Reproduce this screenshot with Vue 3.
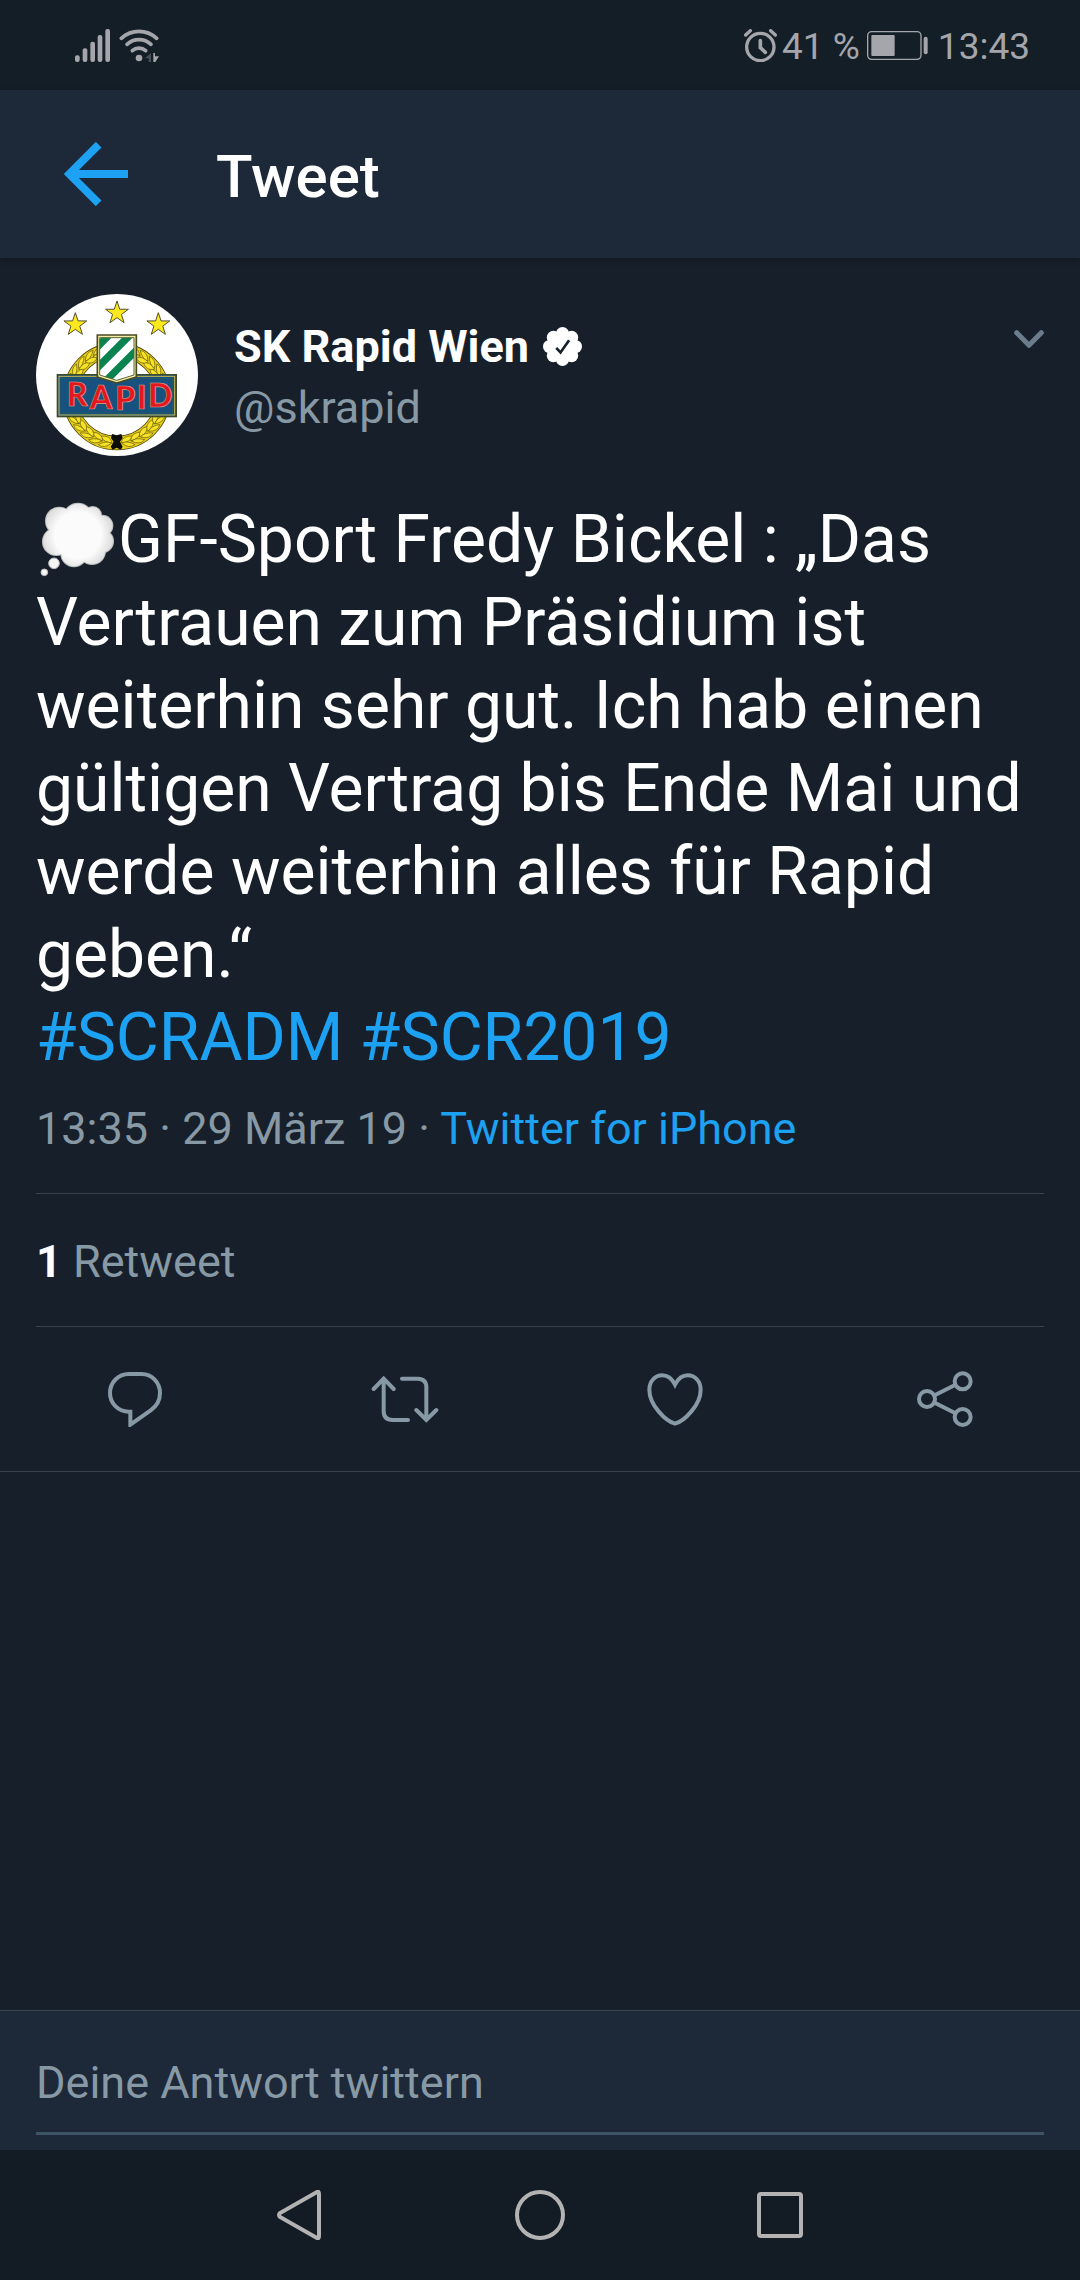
<template>
  <div class="screen">
    <div class="status-bar">
      <div class="status-group status-left">
        <svg class="signal-icon" viewBox="105 84 105 99" aria-label="Signal">
          <rect v-for="bar in signalBars" :key="bar.x" :x="bar.x" :y="bar.y" width="14" :height="183 - bar.y" rx="6" />
        </svg>
        <svg class="wifi-icon" viewBox="237 84 120 99" aria-label="WLAN">
          <g class="wifi-waves">
            <path d="M244 112C274 84 320 84 350 112" />
            <path d="M261 130C281 111 313 111 333 130" />
            <path d="M277 149C288 139 306 139 317 149" />
          </g>
          <circle cx="297" cy="171" r="10" />
          <path class="wifi-idle" d="M333 156V183H326V172H315Z" />
          <path d="M340 156L345 156V166H357L346 183H340Z" />
        </svg>
      </div>
      <div class="status-group">
        <svg class="alarm-icon" viewBox="75 87 99 99" aria-label="Wecker">
          <circle cx="124" cy="141" r="41" />
          <path class="alarm-hand" d="M124 122V143L139 157" />
          <path class="alarm-bell" d="M80 105L94 92M155 92L169 105" />
        </svg>
        <span class="status-text">41 %</span>
        <svg class="battery-icon" viewBox="445 93 183 87" aria-label="Akku">
          <rect class="battery-case" x="447" y="95" width="160" height="83" rx="12" />
          <rect x="458" y="105" width="70" height="63" rx="3" />
          <rect x="615" y="110" width="12" height="53" rx="6" />
        </svg>
        <span class="status-text">13:43</span>
      </div>
    </div>

    <header class="app-header">
      <button class="icon-button" type="button" aria-label="Zurück">
        <svg class="back-icon" viewBox="192 186 192 192">
          <path d="M384 282H215M296 194L208 282L296 370" />
        </svg>
      </button>
      <h1 class="title">Tweet</h1>
    </header>

    <main class="content">
      <article>
        <div class="tweet">
          <div class="author">
            <svg class="avatar" viewBox="48 42 486 486" role="img" aria-label="SK Rapid Wien">
              <circle cx="291" cy="285" r="243" fill="#fff" />
              <polygon
                v-for="star in stars"
                :key="star.x"
                :points="starPoints(star)"
                fill="#fbe91d"
                stroke="#55502a"
                stroke-width="3"
              />
              <circle cx="290" cy="349" r="140" fill="none" stroke="#4b430c" stroke-width="44" />
              <circle cx="290" cy="349" r="140" fill="none" stroke="#e9cf16" stroke-width="39" />
              <g v-for="angle in leafAngles" :key="angle" :transform="leafTransform(angle)">
                <path d="M274 488Q285 466 312 476Q300 493 274 488Z" class="leaf" />
                <path d="M276 490Q292 484 314 502Q294 512 276 490Z" class="leaf" />
              </g>
              <path d="M276 462L290 466L304 462L308 474L300 485L308 500L302 509L290 503L278 509L272 500L281 485L273 474Z" fill="#0b0b08" />
              <rect x="112" y="284" width="357" height="126" fill="#17517f" stroke="#3c4a25" stroke-width="4" />
              <rect x="117" y="289" width="347" height="116" fill="none" stroke="#c9b94c" stroke-width="3" />
              <rect x="123" y="295" width="335" height="104" fill="none" stroke="#2c5a55" stroke-width="2" />
              <path d="M232 165H349V291L290 309L232 291Z" fill="#f4efa8" stroke="#4a4a22" stroke-width="5" />
              <clipPath id="shield"><path d="M239 173H342V285L290 301L239 285Z" /></clipPath>
              <g clip-path="url(#shield)">
                <rect x="232" y="165" width="117" height="144" fill="#fff" />
                <path d="M225 208L272 160M225 270L350 145M250 310L360 200" stroke="#0b8350" stroke-width="22" />
              </g>
              <path d="M239 173H342V285L290 301L239 285Z" fill="none" stroke="#59652e" stroke-width="3" />
              <text class="crest-text" x="140 209 286 350 384" y="379 388 391 387 380">RAPID</text>
            </svg>
            <div class="names">
              <div class="name">
                SK Rapid Wien
                <svg class="badge" viewBox="968 74 118 118" role="img" aria-label="Verifiziert">
                  <circle cx="1027" cy="133" r="46" />
                  <circle v-for="(dot, index) in badgeDots" :key="index" :cx="dot.x" :cy="dot.y" r="20" />
                  <path d="M1008 137L1021 151L1047 114" />
                </svg>
              </div>
              <div class="handle">@skrapid</div>
            </div>
            <button class="icon-button more" type="button" aria-label="Mehr">
              <svg class="chevron" viewBox="102 89 90 54">
                <path d="M110 97L147 135L184 97" />
              </svg>
            </button>
          </div>

          <p class="text"><svg class="cloud" viewBox="48 60 246 234" role="img" aria-label="Gedankenblase">
            <defs>
              <radialGradient id="cloud-fill" gradientUnits="userSpaceOnUse" cx="173" cy="165" r="112">
                <stop offset="0.62" stop-color="#fbfbfb" />
                <stop offset="1" stop-color="#d8d8d8" />
              </radialGradient>
            </defs>
            <circle v-for="(puff, index) in puffs" :key="'o' + index" :cx="puff.x" :cy="puff.y" :r="puff.r" fill="#bdbdbd" />
            <circle v-for="(puff, index) in puffs" :key="'i' + index" :cx="puff.x" :cy="puff.y" :r="puff.r - 3" fill="url(#cloud-fill)" />
            <circle v-for="drop in drops" :key="drop.x" :cx="drop.x" :cy="drop.y" :r="drop.r" fill="#f5f5f5" stroke="#bdbdbd" stroke-width="3" />
          </svg>GF-Sport Fredy Bickel : „Das Vertrauen zum Präsidium ist weiterhin sehr gut. Ich hab einen gültigen Vertrag bis Ende Mai und werde weiterhin alles für Rapid geben.“<br /><a href="#scradm">#SCRADM</a> <a href="#scr2019">#SCR2019</a></p>

          <div class="meta">13:35 · 29 März 19 · <a href="#source">Twitter for iPhone</a></div>
          <div class="stats"><strong>1</strong> Retweet</div>
        </div>

        <div class="actions">
          <button class="icon-button" type="button" aria-label="Antworten">
            <svg class="action-icon" viewBox="141 153 168 168">
              <path d="M206 162H245C276 162 300 188 300 219C300 241 289 259 272 271L211 314V275H206C174 275 150 250 150 219C150 187 175 162 206 162Z" />
            </svg>
          </button>
          <button class="icon-button" type="button" aria-label="Retweeten">
            <svg class="action-icon wide" viewBox="933 153 204 168">
              <path d="M971 178V273Q971 300 998 300H1044M941 207L971 176L1001 207" />
              <path d="M1026 176H1073Q1099 176 1099 202V298M1069 270L1099 300L1129 270" />
            </svg>
          </button>
          <button class="icon-button" type="button" aria-label="Gefällt mir">
            <svg class="action-icon" viewBox="141 153 168 168">
              <path d="M225 194C214 173 200 166 187 166C164 166 148 185 148 209C148 256 198 304 225 311C252 304 302 256 302 209C302 185 286 166 263 166C250 166 236 173 225 194Z" />
            </svg>
          </button>
          <button class="icon-button" type="button" aria-label="Teilen">
            <svg class="action-icon" viewBox="950 153 168 168">
              <circle cx="980" cy="237" r="24" />
              <circle cx="1087" cy="184" r="24" />
              <circle cx="1087" cy="291" r="24" />
              <path d="M1003 226L1064 195M1003 248L1064 279" />
            </svg>
          </button>
        </div>
      </article>
    </main>

    <form class="reply" @submit.prevent>
      <input v-model="reply" class="reply-input" type="text" placeholder="Deine Antwort twittern" aria-label="Deine Antwort twittern" />
    </form>

    <nav class="nav-bar">
      <button class="icon-button" type="button" aria-label="Zurück">
        <svg class="nav-icon" viewBox="0 0 50 50">
          <path d="M42 2Q44 1 44 4V46Q44 49 42 48L5 27Q3 25 5 23Z" />
        </svg>
      </button>
      <button class="icon-button" type="button" aria-label="Startseite">
        <svg class="nav-icon" viewBox="0 0 50 50"><circle cx="25" cy="25" r="23" /></svg>
      </button>
      <button class="icon-button" type="button" aria-label="Übersicht">
        <svg class="nav-icon" viewBox="0 0 50 50"><rect x="4" y="4" width="42" height="42" rx="2" /></svg>
      </button>
    </nav>
  </div>
</template>

<script setup>
import { ref } from 'vue'

const reply = ref('')

const signalBars = [
  { x: 105, y: 163 },
  { x: 128, y: 142 },
  { x: 151, y: 122 },
  { x: 173, y: 102 },
  { x: 196, y: 84 }
]

const stars = [
  { x: 166, y: 134 },
  { x: 291, y: 99 },
  { x: 415, y: 134 }
]

const starPoints = ({ x, y }) => {
  const points = []
  for (let i = 0; i < 10; i++) {
    const radius = i % 2 ? 14 : 36
    const angle = (i * Math.PI) / 5 - Math.PI / 2
    points.push(`${x + radius * Math.cos(angle)},${y + radius * Math.sin(angle)}`)
  }
  return points.join(' ')
}

// wreath leaves, running up both sides from the knot
const leafAngles = []
for (let angle = 12; angle < 165; angle += 12) {
  leafAngles.push(angle, -angle)
}

const leafTransform = (angle) => {
  const rotate = `rotate(${angle} 290 349)`
  return angle > 0 ? `${rotate} translate(580 0) scale(-1 1)` : rotate
}

const badgeDots = Array.from({ length: 8 }, (_, i) => ({
  x: 1027 + 39 * Math.sin((i * Math.PI) / 4),
  y: 133 - 39 * Math.cos((i * Math.PI) / 4)
}))

const puffs = [
  { x: 118, y: 123, r: 43 },
  { x: 174, y: 113, r: 45 },
  { x: 218, y: 106, r: 28 },
  { x: 247, y: 137, r: 33 },
  { x: 246, y: 184, r: 36 },
  { x: 216, y: 213, r: 42 },
  { x: 162, y: 221, r: 41 },
  { x: 109, y: 185, r: 43 },
  { x: 175, y: 165, r: 62 }
]

const drops = [
  { x: 102, y: 250, r: 16 },
  { x: 73, y: 277, r: 10 }
]
</script>

<style>
body {
  background-color: #17202a;
}
</style>

<style scoped>
.screen {
  display: flex;
  flex-direction: column;
  min-height: 100vh;
  background-color: #17202a;
  color: #fff;
  font-family: Roboto, sans-serif;
}

.screen svg {
  display: block;
  flex: none;
}

a {
  color: #1da1f2;
  text-decoration: none;
}

.icon-button {
  display: flex;
  align-items: center;
  justify-content: center;
  padding: 0;
  border: none;
  background: none;
  cursor: pointer;
}

.status-bar {
  display: flex;
  align-items: center;
  justify-content: space-between;
  height: 90px;
  padding: 0 50px 0 75px;
  background-color: #141e27;
  color: #a4a6ab;
  font-size: 37px;
  line-height: 42px;
}

.status-group {
  display: flex;
  align-items: center;
}

.status-group svg {
  fill: #a4a6ab;
}

.status-text {
  padding-top: 3px;
}

.status-left {
  gap: 9px;
}

.signal-icon {
  width: 35px;
  height: 33px;
}

.wifi-icon {
  width: 40px;
  height: 33px;
}

.wifi-waves {
  fill: none;
  stroke: #a4a6ab;
  stroke-width: 11;
  stroke-linecap: round;
}

.wifi-idle {
  fill: #454d57;
}

.alarm-icon {
  width: 33px;
  height: 33px;
  margin-right: 5px;
}

.alarm-icon circle,
.alarm-icon path {
  fill: none;
  stroke: #a4a6ab;
  stroke-width: 10;
  stroke-linecap: round;
}

.alarm-icon .alarm-hand {
  stroke-width: 11;
}

.battery-icon {
  width: 61px;
  height: 29px;
  margin: 0 10px 0 7px;
}

.battery-icon .battery-case {
  fill: none;
  stroke: #a4a6ab;
  stroke-width: 4;
}

.app-header {
  position: relative;
  display: flex;
  align-items: center;
  gap: 88px;
  height: 168px;
  padding: 0 64px;
  background-color: #1d2938;
  box-shadow: 0 2px 6px rgba(0, 0, 0, 0.3);
}

.back-icon {
  width: 64px;
  height: 64px;
  fill: none;
  stroke: #1da1f2;
  stroke-width: 24;
}

.title {
  margin: 0;
  padding-top: 5px;
  font-size: 60px;
  font-weight: 500;
  line-height: 72px;
}

.content {
  flex: 1;
}

.tweet {
  padding: 36px 36px 0;
}

.author {
  display: flex;
  align-items: flex-start;
}

.avatar {
  width: 162px;
  height: 162px;
}

.leaf {
  fill: #f7e325;
  stroke: #6b5f14;
  stroke-width: 2;
}

.crest-text {
  fill: #e5161f;
  stroke: #d9a07c;
  stroke-width: 2;
  font-family: Lato, sans-serif;
  font-size: 96px;
  font-weight: 900;
}

.names {
  flex: 1;
  padding: 22px 0 0 36px;
  font-size: 45px;
  line-height: 61px;
}

.name {
  display: flex;
  align-items: center;
  gap: 14px;
  font-weight: 700;
}

.badge {
  width: 39px;
  height: 39px;
  fill: #fff;
}

.badge path {
  fill: none;
  stroke: #17202a;
  stroke-width: 8;
}

.handle,
.meta,
.stats {
  color: #8899a6;
}

.more {
  padding-top: 36px;
}

.chevron {
  width: 30px;
  height: 18px;
  fill: none;
  stroke: #6b7d8c;
  stroke-width: 15;
  stroke-linecap: round;
  stroke-linejoin: round;
}

.text {
  margin: 42px 0 23px;
  font-size: 66px;
  line-height: 83px;
}

.text .cloud {
  display: inline-block;
  width: 82px;
  height: 78px;
  vertical-align: -16px;
}

.meta,
.stats {
  font-size: 45px;
  line-height: 54px;
}

.meta {
  padding-bottom: 37px;
}

.stats {
  padding: 41px 0 37px;
  border-top: 1px solid #38444d;
  border-bottom: 1px solid #38444d;
}

.stats strong {
  color: #fff;
}

.actions {
  display: grid;
  grid-template-columns: repeat(4, 1fr);
  height: 144px;
  border-bottom: 1px solid #38444d;
}

.action-icon {
  width: 56px;
  height: 56px;
  fill: none;
  stroke: #8899a6;
  stroke-width: 12;
  stroke-linecap: round;
}

.action-icon.wide {
  width: 68px;
}

.reply {
  padding: 36px 36px 15px;
  border-top: 1px solid #38444d;
  background-color: #1d2938;
}

.reply-input {
  display: block;
  box-sizing: border-box;
  width: 100%;
  padding: 9px 0 22px;
  border: none;
  border-bottom: 3px solid #3d5466;
  outline: none;
  background: none;
  color: #fff;
  font-family: inherit;
  font-size: 45px;
  line-height: 54px;
}

.reply-input::placeholder {
  color: #8899a6;
  opacity: 1;
}

.nav-bar {
  display: grid;
  grid-template-columns: repeat(3, 1fr);
  height: 130px;
  padding: 0 calc(100% / 6);
  background-color: #131c25;
}

.nav-icon {
  width: 50px;
  height: 50px;
  fill: none;
  stroke: #b3b3b3;
  stroke-width: 4;
}
</style>
